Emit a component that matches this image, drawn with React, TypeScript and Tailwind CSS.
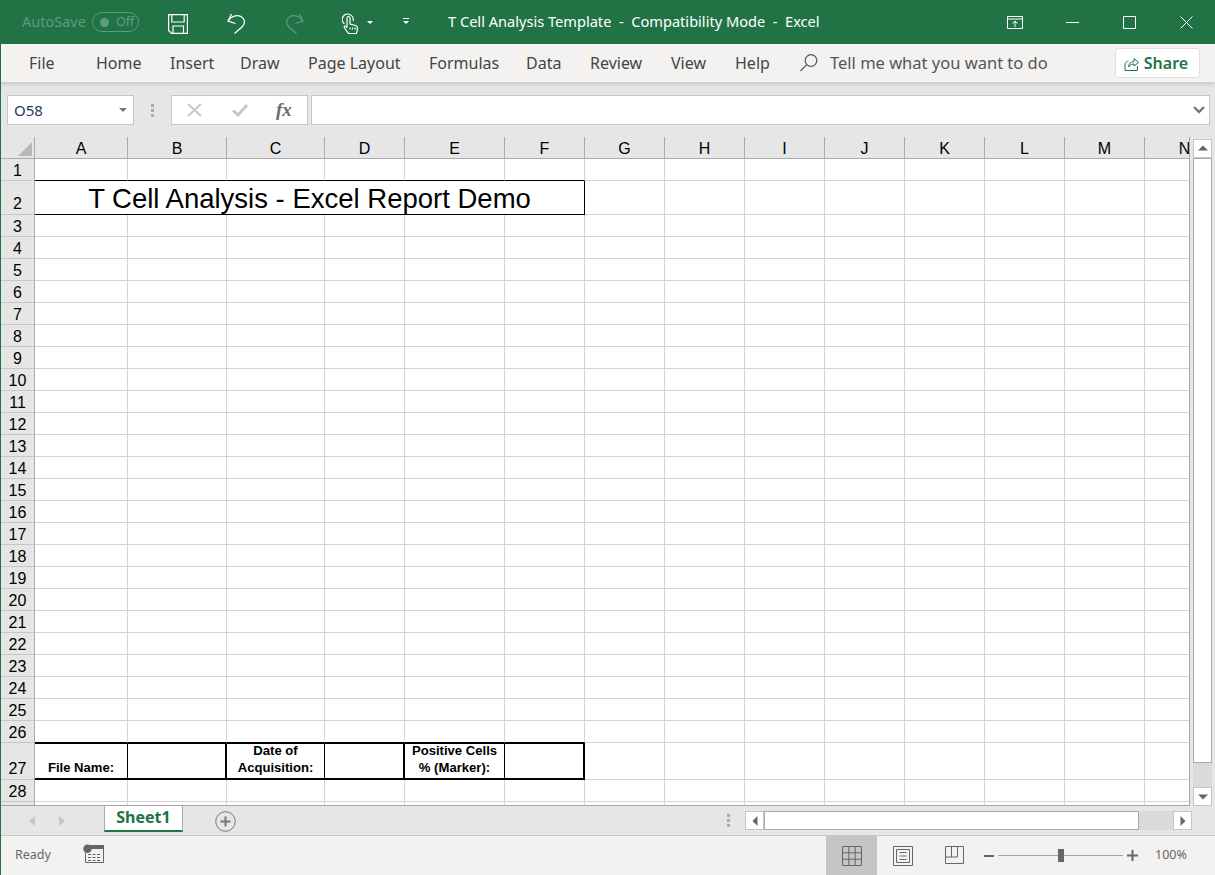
const COLS = [
  { label: "A", w: 93 },
  { label: "B", w: 99 },
  { label: "C", w: 98 },
  { label: "D", w: 80 },
  { label: "E", w: 100 },
  { label: "F", w: 80 },
  { label: "G", w: 80 },
  { label: "H", w: 80 },
  { label: "I", w: 80 },
  { label: "J", w: 80 },
  { label: "K", w: 80 },
  { label: "L", w: 80 },
  { label: "M", w: 80 },
  { label: "N", w: 80 },
];

const TABS = [
  { label: "Home", w: "w-[46px]" },
  { label: "Insert", w: "w-[42px]" },
  { label: "Draw", w: "w-[40px]" },
  { label: "Page Layout", w: "w-[93px]" },
  { label: "Formulas", w: "w-[69px]" },
  { label: "Data", w: "w-[36px]" },
  { label: "Review", w: "w-[53px]" },
  { label: "View", w: "w-[36px]" },
  { label: "Help", w: "w-[35px]" },
];

const ROWS = Array.from({ length: 29 }, (_, i) => i + 1);

function rowHeight(r: number) {
  if (r === 2) return 34;
  if (r === 27) return 37;
  return 22;
}

function Cell({ r, c }: { r: number; c: number }) {
  // rows 1 and 26 carry the top edge of the outlined title and form
  const aboveTable = c < 6 && (r === 1 || r === 26);
  return <div className={aboveTable ? "border-r border-b border-r-[#d4d4d4] border-b-black" : "border-r border-b border-[#d4d4d4]"} />;
}

function FormCell({ c, lines }: { c: number; lines: string[] }) {
  return (
    <div
      className={`flex flex-col items-center justify-end border-t border-b-2 border-black pb-[2px] text-center font-['Liberation_Sans',sans-serif] text-[13.1px] leading-[17px] font-bold whitespace-nowrap text-black ${c % 2 === 1 ? "border-r-2" : "border-r"}`}
    >
      {lines.map((l) => (
        <span key={l}>{l}</span>
      ))}
    </div>
  );
}

function Sheet() {
  return (
    <div className="h-[669px] w-[1189px] overflow-hidden border-r border-b border-[#a6a6a6] bg-white">
      <div
        className="grid w-[1248px]"
        style={{
          gridTemplateColumns: `34px ${COLS.map((c) => `${c.w}px`).join(" ")}`,
          gridTemplateRows: `22px ${ROWS.map((r) => `${rowHeight(r)}px`).join(" ")}`,
        }}
      >
        <div className="flex items-end justify-end border-r border-b border-[#ababab] bg-[#e6e6e6] p-[2px]">
          <svg width="14" height="14" viewBox="0 0 14 14">
            <path d="M14 0v14H0z" fill="#b9b9b9" />
          </svg>
        </div>
        {COLS.map((c) => (
          <div
            key={c.label}
            className="flex items-center justify-center border-r border-b border-[#ababab] bg-[#e6e6e6] pt-[3px] font-['Liberation_Sans',sans-serif] text-[16px] text-black"
          >
            {c.label}
          </div>
        ))}
        {ROWS.map((r) => (
          <Row key={r} r={r} />
        ))}
      </div>
    </div>
  );
}

function Row({ r }: { r: number }) {
  const tall = r === 2 || r === 27;
  const header = (
    <div
      className={`flex items-end justify-center border-r border-b border-r-[#ababab] border-b-[#c6c6c6] bg-[#e6e6e6] font-['Liberation_Sans',sans-serif] text-[16px] text-black ${tall ? "leading-[20px]" : "leading-[18px]"}`}
    >
      {/* row 29 is only a sliver above the tabs, its number does not show */}
      {r < 29 ? r : null}
    </div>
  );
  if (r === 2) {
    return (
      <>
        {header}
        <div className="col-span-6 flex items-center justify-center border-r border-b border-black pt-[3px] font-['Liberation_Sans',sans-serif] text-[27.5px] leading-none text-black">
          T Cell Analysis - Excel Report Demo
        </div>
        {COLS.slice(6).map((c, i) => (
          <Cell key={c.label} r={r} c={i + 6} />
        ))}
      </>
    );
  }
  if (r === 27) {
    return (
      <>
        {header}
        <FormCell c={0} lines={["File Name:"]} />
        <FormCell c={1} lines={[]} />
        <FormCell c={2} lines={["Date of", "Acquisition:"]} />
        <FormCell c={3} lines={[]} />
        <FormCell c={4} lines={["Positive Cells", "% (Marker):"]} />
        <FormCell c={5} lines={[]} />
        {COLS.slice(6).map((c, i) => (
          <Cell key={c.label} r={r} c={i + 6} />
        ))}
      </>
    );
  }
  return (
    <>
      {header}
      {COLS.map((c, i) => (
        <Cell key={c.label} r={r} c={i} />
      ))}
    </>
  );
}

function TitleBar() {
  return (
    <div className="flex h-[44px] shrink-0 items-center bg-[#217346] font-['Noto_Sans',sans-serif] text-white">
      <span className="ml-[22px] w-[70px] text-[14.5px] text-[#5f9a7c]">AutoSave</span>
      <div className="flex h-[20px] w-[47px] items-center rounded-full border border-[#5f9a7c] pl-[7px]">
        <span className="h-[9px] w-[9px] rounded-full bg-[#5f9a7c]" />
        <span className="ml-[7px] text-[12.5px] text-[#5f9a7c]">Off</span>
      </div>
      <svg className="mt-[4px] ml-[29px]" width="20" height="20" viewBox="0 0 20 20" fill="none" stroke="#fff" strokeWidth="1.2">
        <path d="M.6.6h18.800v18.800H3.500L.6 16.500z" />
        <path d="M3.800.6v7.400h12.400V.6M5 19.400V12h10.500v7.400" />
      </svg>
      <svg className="mt-[3px] ml-[39px]" width="19" height="21" viewBox="0 0 19 21" fill="none" stroke="#fff" strokeWidth="1.300">
        <path d="M1.500 7.500C4 3 10 1.500 14 3.500c4 2.500 5 6.500 1 10.500l-7.500 6.500" />
        <path d="M4.500 1L1 8l7.500 2.500" />
      </svg>
      <svg className="mt-[3px] ml-[39px]" width="19" height="21" viewBox="0 0 19 21" fill="none" stroke="#5f9a7c" strokeWidth="1.300">
        <path d="M17.500 7.500C15 3 9 1.500 5 3.500c-4 2.500-5 6.500-1 10.500l7.500 6.500" />
        <path d="M14.500 1L18 8l-7.500 2.500" />
      </svg>
      <svg className="mt-[3px] ml-[38px]" width="16" height="21" viewBox="0 0 16 21" fill="none" stroke="#fff" strokeWidth="1.200">
        <path d="M2.500 11A5.500 5.500 0 1 1 11 8" />
        <path d="M5 14V5a1.500 1.500 0 0 1 3 0v6l5.500 1.500c1 .3 1.800 1 1.800 2v3l-1 3H6.500L2.500 15c-.8-1.500.7-2.500 1.500-1.500L5 15" />
        <path d="M8 14.500v2M10.500 14.500v2M13 14.500v2" />
      </svg>
      <svg className="ml-[9px]" width="6" height="3" viewBox="0 0 6 3">
        <path d="M0 0h6L3 3z" fill="#fff" />
      </svg>
      <svg className="mb-[3px] ml-[30px]" width="6" height="6" viewBox="0 0 6 6">
        <path d="M0 0h6v1H0zM0 3h6L3 6z" fill="#fff" />
      </svg>
      <span className="ml-[39px] w-[375px] text-[14.6px] whitespace-pre">T Cell Analysis Template  -  Compatibility Mode  -  Excel</span>
      <svg className="ml-[184px]" width="16" height="13" viewBox="0 0 16 13" fill="none" stroke="#fff">
        <path d="M.5.5h15v12H.5zM.5 3h15M8 11V5M5.500 7.500L8 5l2.500 2.500" />
      </svg>
      <svg className="ml-[43px]" width="13" height="1" viewBox="0 0 13 1">
        <path d="M0 0h13v1H0z" fill="#fff" />
      </svg>
      <svg className="ml-[44px]" width="13" height="13" viewBox="0 0 13 13" fill="none" stroke="#fff">
        <path d="M.5.5h12v12H.5z" />
      </svg>
      <svg className="ml-[44px]" width="13" height="13" viewBox="0 0 13 13" fill="none" stroke="#fff">
        <path d="M.5.5l12 12M12.500.5l-12 12" />
      </svg>
    </div>
  );
}

function Ribbon() {
  return (
    <div className="relative z-10 flex h-[38px] shrink-0 items-center bg-[#f3f2f1] font-['Noto_Sans',sans-serif] text-[16px] text-[#444] shadow-[0_2px_4px_rgba(0,0,0,0.14)]">
      <span className="ml-[28px] w-[67px]">File</span>
      <div className="flex w-[704px] gap-7 whitespace-nowrap">
        {TABS.map((t) => (
          <span key={t.label} className={t.w}>
            {t.label}
          </span>
        ))}
      </div>
      <svg width="20" height="20" viewBox="0 0 20 20" fill="none" stroke="#555" strokeWidth="1.2" className="-ml-[1px]">
        <circle cx="12" cy="7.500" r="5.800" />
        <path d="M7.800 11.700L1.500 18" />
      </svg>
      <span className="ml-[11px] text-[16.5px] text-[#555]">Tell me what you want to do</span>
      <div className="mr-[15px] ml-auto flex h-[30px] w-[85px] items-center justify-center gap-[5px] rounded-[3px] border border-[#e1dfdd] bg-white pr-[3px] font-semibold text-[#217346]">
        <svg width="15" height="15" viewBox="0 0 15 15" fill="none" stroke="#217346">
          <path d="M1 14.500V7.500l3-3M1 14.500h12.500V10" />
          <path d="M4.500 11c0-3 2.500-5.500 5.500-5.500V2.500l4.500 4-4.500 3.500V8c-2 0-4 1-5.500 3z" />
        </svg>
        <span>Share</span>
      </div>
    </div>
  );
}

function FormulaBar() {
  return (
    <div className="flex h-[55px] shrink-0 items-center pt-[1px] pr-[5px] pl-[6px]">
      <div className="flex h-[30px] w-[127px] items-center justify-between border border-[#c6c6c6] bg-white px-[6px] font-['Noto_Sans',sans-serif] text-[15px] text-[#2b3a55]">
        <span>O58</span>
        <svg width="8" height="4" viewBox="0 0 8 4">
          <path d="M0 0h8L4 4z" fill="#777" />
        </svg>
      </div>
      <div className="mx-[17px] flex flex-col gap-[2px]">
        <span className="h-[3px] w-[3px] bg-[#aaa]" />
        <span className="h-[3px] w-[3px] bg-[#aaa]" />
        <span className="h-[3px] w-[3px] bg-[#aaa]" />
      </div>
      <div className="flex h-[30px] w-[137px] items-center border border-[#c6c6c6] bg-white pl-[15px]">
        <svg width="15" height="14" viewBox="0 0 15 14" fill="none" stroke="#c8c8c8" strokeWidth="2">
          <path d="M1 1l13 12M14 1L1 13" />
        </svg>
        <svg className="ml-[30px]" width="16" height="13" viewBox="0 0 16 13" fill="none" stroke="#c8c8c8" strokeWidth="3">
          <path d="M1 6.500l5 4.500 9-10" />
        </svg>
        <span className="ml-[28px] font-['Liberation_Serif',serif] text-[19px] font-bold text-[#6b6b6b] italic">fx</span>
      </div>
      <div className="ml-[3px] flex h-[30px] flex-1 items-center justify-end border border-[#c6c6c6] bg-white pr-[4px]">
        <svg width="12" height="8" viewBox="0 0 12 8" fill="none" stroke="#777" strokeWidth="2.400">
          <path d="M1 1l5 5 5-5" />
        </svg>
      </div>
    </div>
  );
}

function ScrollButton({ d }: { d: string }) {
  return (
    <div className="flex h-[19px] w-[19px] items-center justify-center border border-[#c6c6c6] bg-white">
      <svg width="10" height="10" viewBox="0 0 10 10">
        <path d={d} fill="#666" />
      </svg>
    </div>
  );
}

function VerticalScroll() {
  return (
    <div className="flex w-[25px] flex-col pt-[2px] pl-[3px]">
      <ScrollButton d="M0 7.500L5 2.500l5 5z" />
      <div className="h-[607px] w-[19px] border border-[#ababab] bg-white" />
      <div className="h-[24px] w-[19px] bg-[#dadada]" />
      <ScrollButton d="M0 2.500l5 5 5-5z" />
    </div>
  );
}

function SheetTabs() {
  return (
    <div className="flex h-[30px] shrink-0 items-start border-b border-[#c6c6c6] font-['Noto_Sans',sans-serif]">
      <div className="ml-[28px] flex h-[29px] w-[75px] items-center gap-[24px]">
        <svg width="6" height="10" viewBox="0 0 6 10">
          <path d="M6 0v10L0 5z" fill="#c6c6c6" />
        </svg>
        <svg width="6" height="10" viewBox="0 0 6 10">
          <path d="M0 0v10l6-5z" fill="#c6c6c6" />
        </svg>
      </div>
      <div className="flex h-[26px] w-[79px] items-center justify-center border-x border-b-2 border-x-[#ababab] border-b-[#217346] bg-white pb-[2px] text-[16px] font-bold text-[#217346]">
        Sheet1
      </div>
      <svg className="mt-[5px] ml-[32px]" width="21" height="21" viewBox="0 0 21 21" fill="none" stroke="#777">
        <circle cx="10.500" cy="10.500" r="9.800" />
        <path strokeWidth="2" d="M10.500 5.500v10M5.500 10.500h10" />
      </svg>
      <div className="mt-[8px] ml-[491px] flex flex-col gap-[2px]">
        <span className="h-[3px] w-[3px] bg-[#aaa]" />
        <span className="h-[3px] w-[3px] bg-[#aaa]" />
        <span className="h-[3px] w-[3px] bg-[#aaa]" />
      </div>
      <div className="mt-[5px] ml-[15px] flex">
        <ScrollButton d="M7.500 0v10l-5-5z" />
        <div className="h-[19px] w-[375px] border border-[#ababab] bg-white" />
        <div className="h-[19px] w-[34px] bg-[#dadada]" />
        <ScrollButton d="M2.500 0v10l5-5z" />
      </div>
    </div>
  );
}

function StatusBar() {
  return (
    <div className="flex h-[39px] shrink-0 items-center bg-[#f3f2f1] font-['Noto_Sans',sans-serif] text-[12.5px] text-[#666]">
      <span className="ml-[14px] w-[68px]">Ready</span>
      <svg className="mb-[4px]" width="21" height="19" viewBox="0 0 21 19" fill="none" stroke="#666">
        <path d="M9 2.500h11.500v16H2.500v-10" />
        <path d="M7 1h14v4H7z" fill="#666" stroke="none" />
        <circle cx="4.500" cy="4.700" r="4.300" fill="#666" stroke="none" />
        <path d="M5 10.500h13M5 13.500h13M5 16.500h13" strokeDasharray="3 1.500" />
      </svg>
      <div className="ml-[722px] flex h-full w-[51px] items-center justify-center bg-[#c6c5c3]">
        <svg width="20" height="20" viewBox="0 0 20 20" fill="none" stroke="#666">
          <path d="M.5.5h19v19H.5zM.5 6.800h19M.5 13.200h19M6.800.5v19M13.200.5v19" />
        </svg>
      </div>
      <svg className="ml-[16px]" width="20" height="20" viewBox="0 0 20 20" fill="none" stroke="#666">
        <path d="M.5.5h19v19H.5zM3.500 3.500h13v13h-13zM6.500 6.500h7M6.500 10h7M6.500 13.500h7" />
      </svg>
      <svg className="ml-[32px]" width="20" height="20" viewBox="0 0 20 20" fill="none" stroke="#666">
        <path d="M.5.500h18v17H.5zM.5 11h12V.5M6.500.5V11" />
      </svg>
      <span className="ml-[19px] h-[2px] w-[10px] bg-[#666]" />
      <div className="relative ml-[4px] h-[1px] w-[125px] bg-[#a6a6a6]">
        <span className="absolute top-[-6px] left-[60px] h-[13px] w-[6px] bg-[#666]" />
      </div>
      <svg className="ml-[4px]" width="11" height="11" viewBox="0 0 11 11">
        <path d="M4.500 0h2v4.500H11v2H6.500V11h-2V6.500H0v-2h4.500z" fill="#666" />
      </svg>
      <span className="ml-[17px] text-[#666]">100%</span>
    </div>
  );
}

export default function App() {
  return (
    <div className="flex h-[875px] w-[1215px] flex-col overflow-hidden bg-[#e6e6e6]">
      <TitleBar />
      <div className="flex flex-1 flex-col border-l border-[#217346]">
        <Ribbon />
        <FormulaBar />
        <div className="flex h-[669px] shrink-0">
          <Sheet />
          <VerticalScroll />
        </div>
        <SheetTabs />
        <StatusBar />
      </div>
    </div>
  );
}
